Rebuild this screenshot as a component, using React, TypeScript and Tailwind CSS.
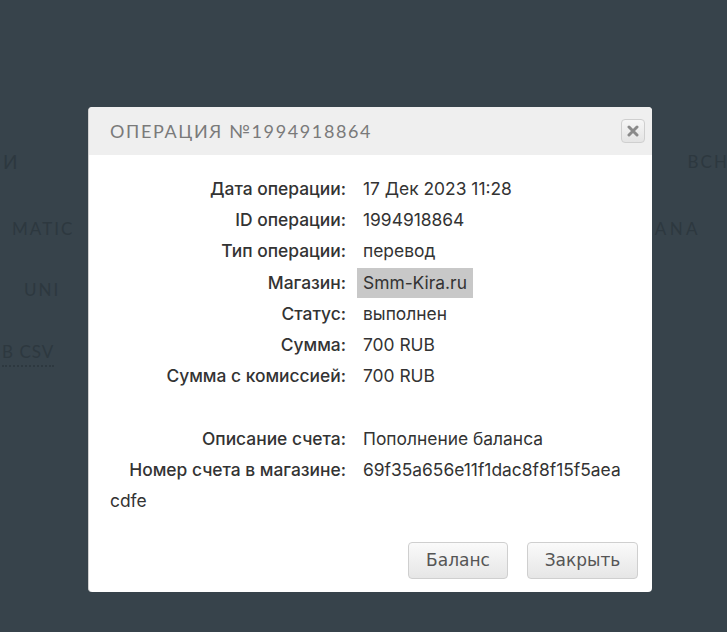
import React from "react";

const rows: [string, React.ReactNode][] = [
  ["Дата операции:", "17 Дек 2023 11:28"],
  ["ID операции:", "1994918864"],
  ["Тип операции:", "перевод"],
  [
    "Магазин:",
    <span className="inline-block bg-[#c8c8c8] px-[6px] -ml-[6px] leading-[30px]">Smm-Kira.ru</span>,
  ],
  ["Статус:", "выполнен"],
  ["Сумма:", "700 RUB"],
  ["Сумма с комиссией:", "700 RUB"],
  ["\u00a0", "\u00a0"],
  ["Описание счета:", "Пополнение баланса"],
];

export default function App() {
  return (
    <div className="relative w-[727px] h-[632px] overflow-hidden bg-[#37434b] font-['Lato',sans-serif]">
      {/* background page content */}
      <div className="flex flex-col pt-[150px] text-[17px] tracking-[0.12em] text-[#2d383f] uppercase">
        <div className="flex justify-between h-[24px] items-center">
          <span className="ml-[3px] text-[19px]">И</span>
          <span className="-mr-[2px]">BCH</span>
        </div>
        <div className="flex justify-between h-[24px] items-center mt-[43px]">
          <span className="ml-[12px]">MATIC</span>
          <span className="mr-[26px] tracking-[0.2em]">ANA</span>
        </div>
        <div className="flex h-[24px] items-center mt-[37px]">
          <span className="ml-[24px]">UNI</span>
        </div>
        <div className="flex h-[24px] items-center mt-[39px]">
          <span className="ml-[2px] tracking-[0.06em] border-b-2 border-dotted border-[#2d383f]">B CSV</span>
        </div>
      </div>

      {/* modal */}
      <div className="absolute left-[88px] top-[107px] w-[564px] h-[485px] bg-white rounded-[4px] border-l border-[#d0d0d0] flex flex-col">
        <div className="h-[48px] bg-[#efefef] rounded-t-[4px] flex items-center justify-between pl-[21px] pr-[7px]">
          <span className="text-[18px] tracking-[0.09em] text-[#7a7a7a] font-['Lato',sans-serif]">
            ОПЕРАЦИЯ №1994918864
          </span>
          <button className="w-[24px] h-[24px] rounded-[4px] border border-[#cfcfcf] bg-gradient-to-b from-[#f6f6f6] to-[#e4e4e4] flex items-center justify-center">
            <svg width="12" height="12" viewBox="0 0 12 12">
              <path d="M2 2 L10 10 M10 2 L2 10" stroke="#8a8a8a" strokeWidth="3" strokeLinecap="round" />
            </svg>
          </button>
        </div>
        <div className="flex-1 px-[21px] pt-[18px] text-[17.4px] text-[#333] font-['Inter',sans-serif] leading-[31.2px]">
          <div className="grid grid-cols-[236px_1fr] gap-x-[17px]">
            {rows.map(([l, v], i) => (
              <React.Fragment key={i}>
                <div className="text-right font-medium">{l}</div>
                <div>{v}</div>
              </React.Fragment>
            ))}
          </div>
          <div>
            <span className="inline-block w-[236px] mr-[17px] text-right font-medium">Номер счета в магазине:</span>
            69f35a656e11f1dac8f8f15f5aea
            <br />
            cdfe
          </div>
        </div>
        <div className="flex justify-end gap-[19px] pr-[14px] pb-[13px] font-['DejaVu_Sans',sans-serif] text-[17px] text-[#555]">
          <button className="w-[100px] h-[37px] rounded-[4px] border border-[#cfcfcf] bg-gradient-to-b from-[#fafafa] to-[#e6e6e6]">
            Баланс
          </button>
          <button className="w-[111px] h-[37px] rounded-[4px] border border-[#cfcfcf] bg-gradient-to-b from-[#fafafa] to-[#e6e6e6]">
            Закрыть
          </button>
        </div>
      </div>
    </div>
  );
}
